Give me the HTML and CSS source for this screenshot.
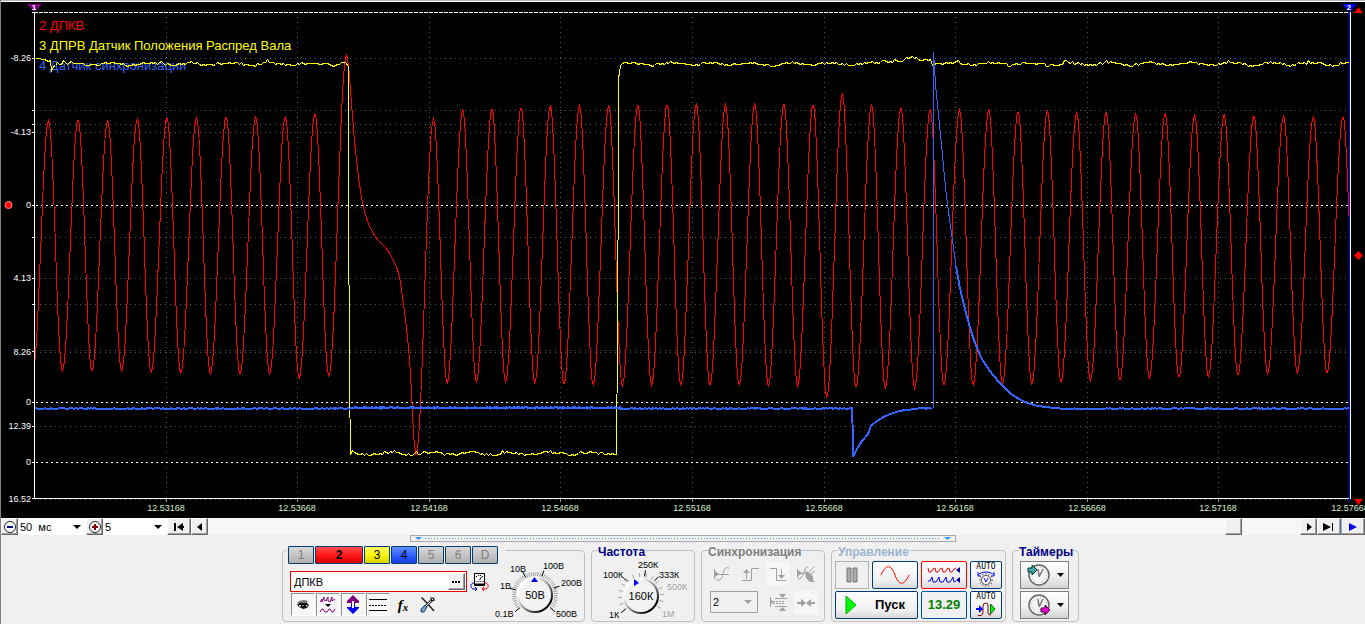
FILE: index.html
```html
<!DOCTYPE html>
<html lang="ru">
<head>
<meta charset="utf-8">
<title>Осциллограф</title>
<link rel="stylesheet" href="styles.css">
</head>
<body>
<main class="app">
  <svg class="chart" viewBox="1 0 1364 518" role="img" aria-label="Осциллограмма">
    <rect class="chart-bg" x="1" y="0" width="1364" height="518"/>
    <rect x="1" y="0" width="1364" height="1" fill="#b4b4b4"/>
    <rect x="1" y="1" width="1364" height="1" fill="#fff"/>
    <g class="grid" id="grid"></g>
    <g class="zero">
      <path class="top-line" d="M34 12.500H1350"/>
      <path d="M36 205.500H1350M36 402.500H1350M36 462.500H1350"/>
    </g>
    <text class="name ch2" x="39" y="30">2 ДПКВ</text>
    <text class="name ch3" x="39" y="50">3 ДПРВ Датчик Положения Распред Вала</text>
    <text class="name ch4" x="39" y="70">4 Датчик синхронизации</text>
    <path class="trace red" id="red"/>
    <path class="trace yellow" id="yellow"/>
    <path class="trace blue" id="blue"/>
    <path class="trace blue thin" d="M933.500 52V408"/>
    <path class="axis" d="M34.500 12V499M32 498.500H1350M1350.500 12V499M32 12.500H34M32 58.500H34M32 110.500H34M32 124.500H34M32 132.500H34M32 205.500H34M32 237.500H34M32 278.500H34M32 304.500H34M32 351.500H34M32 402.500H34M32 426.500H34M32 462.500H34"/>
    <path d="M1349.500 12V502" stroke="#00f" shape-rendering="crispEdges"/>
    <g class="ylabels">
      <text x="31" y="61">-8.26</text><text x="31" y="135">-4.13</text><text x="31" y="208">0</text>
      <text x="31" y="281">4.13</text><text x="31" y="355">8.26</text><text x="31" y="405">0</text>
      <text x="31" y="429">12.39</text><text x="31" y="465">0</text><text x="31" y="502">16.52</text>
    </g>
    <g class="xlabels">
      <text x="166" y="511">12.53168</text><text x="297" y="511">12.53668</text><text x="429" y="511">12.54168</text>
      <text x="560" y="511">12.54668</text><text x="692" y="511">12.55168</text><text x="824" y="511">12.55668</text>
      <text x="955" y="511">12.56168</text><text x="1087" y="511">12.56668</text><text x="1218" y="511">12.57168</text>
      <text x="1350" y="511">12.57668</text>
    </g>
    <path d="M27 4H42L34.500 12Z" fill="#800080"/><text class="cursor" x="34" y="10">1</text>
    <path d="M1342 4H1357L1349.500 12Z" fill="#00f"/><text class="cursor" x="1349" y="10">2</text>
    <circle cx="8.500" cy="205" r="3.500" fill="#f00" stroke="#f88"/>
    <path d="M1354 13L1358.500 7L1363 13ZM1358.500 251L1363 255.500L1358.500 260L1354 255.500ZM1354 499H1363L1358.500 505Z" fill="#f00"/>
  </svg>

  <div class="timebar">
    <button class="bevel zoom-btn" aria-label="Уменьшить"><svg width="14" height="14"><circle cx="7" cy="7" r="5.500" fill="#fff" stroke="#222"/><path d="M4 7H10" stroke="#008" stroke-width="2"/></svg></button>
    <label class="drop drop-time"><select aria-label="Развёртка"><option>50&nbsp; мс</option></select><svg class="arrow" width="8" height="4"><path d="M0 0H8L4 4Z"/></svg></label>
    <button class="bevel zoom-btn" aria-label="Увеличить"><svg width="14" height="14"><circle cx="7" cy="7" r="5.500" fill="#fff" stroke="#222"/><path d="M4 7H10M7 4V10" stroke="#800" stroke-width="2"/></svg></button>
    <label class="drop drop-scale"><select aria-label="Масштаб"><option>5</option></select><svg class="arrow" width="8" height="4"><path d="M0 0H8L4 4Z"/></svg></label>
    <button class="bevel wide" aria-label="В начало"><svg width="12" height="8"><path d="M1 0H3V8H1ZM4 4L10 0V3H11V5H10V8Z"/></svg></button>
    <button class="bevel narrow" aria-label="Назад"><svg width="6" height="8"><path d="M5 0V8L0 4Z"/></svg></button>
    <div class="track"><span class="thumb bevel"></span></div>
    <button class="bevel narrow" aria-label="Вперёд"><svg width="6" height="8"><path d="M1 0V8L6 4Z"/></svg></button>
    <button class="bevel wide" aria-label="В конец"><svg width="12" height="8"><path d="M0 0L8 4L0 8ZM9 0H10V8H9Z"/></svg></button>
    <button class="bevel wide live" aria-label="Воспроизвести"><svg width="10" height="8"><path d="M1 0L9 4L1 8Z" fill="#00f"/></svg></button>
  </div>

  <section class="panel">
    <div class="splitter"><svg width="7" height="3"><path d="M0 0H7L3.500 3Z"/></svg><span class="dots"></span><svg width="7" height="3"><path d="M0 0H7L3.500 3Z"/></svg></div>
    <div class="groups">

      <section class="group channels">
        <div class="settings">
          <div class="tabs">
            <button class="tab">1</button><button class="tab active">2</button><button class="tab t3">3</button><button class="tab t4">4</button><button class="tab">5</button><button class="tab">6</button><button class="tab">D</button>
          </div>
          <div class="name-row">
            <div class="name-box"><input aria-label="Имя канала" value="ДПКВ"><button class="bevel more" aria-label="Выбрать"><svg width="9" height="2"><path d="M0 0H2V2H0ZM3 0H5V2H3ZM6 0H8V2H6Z"/></svg></button></div>
            <button class="flat" aria-label="Прибор"><svg width="20" height="20"><rect x="4.500" y="1.500" width="10" height="12" fill="#fff" stroke="#000"/><path d="M4 11.500H15V14H4Z"/><path d="M5 9.500H14" stroke="#888"/><path d="M6.500 4V5M8.500 3V4M10.500 3V4M12.500 4V5M9.500 8L11.500 5" stroke="#000"/><path d="M4 11C0 11 0 16 3 17H7M5 15L7 17L5 19" fill="none" stroke="#009"/><path d="M15 11C19 11 19 16 16 17H12M14 15L12 17L14 19" fill="none" stroke="#e00"/></svg></button>
          </div>
          <div class="tools">
            <button class="sunk" aria-label="Видимость"><svg width="16" height="14"><path d="M2 5L4 3L9 2L13 3L12 5Z" fill="#777"/><path d="M2 6L5 5H12L14 7L12 10L8 11L4 9Z" fill="#111"/><path d="M4 7H6V9L4 8ZM11 7H13L11 9Z" fill="#ddd"/><path d="M7 7H9V8H7Z" fill="#678"/></svg></button>
            <button class="sunk" aria-label="Сглаживание"><svg width="18" height="18"><path d="M1 6L3 3V6L5 1V4L7 5L9 1V5L11 6L13 1V5L16 3" fill="none" stroke="#800080"/><path d="M6 8H12L9 11Z"/><path d="M1 16L3 13H4L6 16H8L10 13H11L13 16H14L16 13" fill="none" stroke="#800080"/></svg></button>
            <button class="sunk" aria-label="Инвертировать"><svg width="16" height="19"><path d="M8 0L14 6V8H10V9H6V8H2V6Z" fill="#800080"/><path d="M6 9H10V12H14V13L8 19L2 13V12H6Z" fill="#00f"/><path d="M7 6H9V13H7Z" fill="#fff"/></svg></button>
            <button class="sunk" aria-label="Уровни"><svg width="18" height="16"><path d="M0 2.500H18M0 13.500H18" stroke="#000"/><path d="M0 8.500H18" stroke="#000" stroke-dasharray="2 1"/></svg></button>
            <button class="flat fx" aria-label="Функция">f<span>x</span></button>
            <button class="flat" aria-label="Настройка"><svg width="16" height="17"><path d="M1.500 1.500L6 6L14 15" fill="none" stroke="#222" stroke-width="1.500"/><path d="M14 2L6 10" stroke="#333" stroke-width="2.500"/><path d="M13 3L6 10" stroke="#fff"/><path d="M5 9L7 11L4 16L1 16L1 13Z" fill="#79c" stroke="#246"/><path d="M11 1V4L12 5L15 4" fill="none" stroke="#222"/></svg></button>
          </div>
        </div>
        <svg class="dial" width="88" height="66" id="dial-volt">
          <defs><linearGradient id="rim" x1="0" y1="0" x2="1" y2="1"><stop offset="0.250" stop-color="#fff"/><stop offset="0.600" stop-color="#777"/><stop offset="0.850" stop-color="#000"/></linearGradient></defs>
          <g class="ticks"></g>
          <circle cx="40" cy="40" r="17" fill="#f2f2f2" stroke="url(#rim)" stroke-width="2"/>
          <path d="M36 27H43L39.500 22Z" fill="#00f"/>
          <text class="val" x="40" y="44">50В</text>
          <g class="dlabel"><text x="0" y="62">0.1В</text><text x="5" y="34">1В</text><text x="15" y="17">10В</text><text x="48" y="14">100В</text><text x="66" y="31">200В</text><text x="61" y="62">500В</text></g>
        </svg>
      </section>

      <section class="group freq">
        <h2 class="title">Частота</h2>
        <svg class="dial" width="96" height="64" id="dial-freq">
          <g class="ticks"></g>
          <circle cx="45" cy="37" r="17" fill="#f2f2f2" stroke="url(#rim)" stroke-width="2"/>
          <path d="M38 20V27L43 24Z" fill="#00f"/>
          <text class="val" x="45" y="41">160К</text>
          <g class="dlabel"><text x="13" y="59">1К</text><text x="7" y="19">100К</text><text x="42" y="9">250К</text><text x="63" y="19">333К</text><text class="off" x="71" y="31">500К</text><text class="off" x="66" y="58">1М</text></g>
        </svg>
      </section>

      <section class="group sync">
        <h2 class="title gray">Синхронизация</h2>
        <div class="sync-grid">
          <button class="tool" aria-label="Уровень"><svg width="20" height="18"><path d="M3 6L7 9L3 12Z"/><path class="ln" d="M2.500 4V14M2 9.500H17M4 15C9 16 10 13 11 9C12 4 13 2 17 3"/></svg></button>
          <button class="tool" aria-label="Фронт"><svg width="20" height="18"><path class="ln" d="M2 15.500H11.500V3.500H19M6.500 14V7"/><path d="M3 8L6.500 4L10 8Z"/></svg></button>
          <button class="tool checked" aria-label="Спад"><svg width="20" height="18"><path class="ln" d="M2 3.500H8.500V15.500H18M13.500 4V11"/><path d="M10 10H17L13.500 14Z"/></svg></button>
          <button class="tool" aria-label="Вручную"><svg width="20" height="18"><path class="ln" d="M1.500 4V13M2 8.500H9M2 14C8 15 7 2 12 2M13 7L18 2M15 9L19 6"/><path d="M2 5L6 8L2 11ZM9 6L12 7L15 9L17 12V15L19 17H14L10 13Z"/></svg></button>
          <label class="drop sync-drop"><select aria-label="Канал синхронизации"><option>2</option></select><svg class="arrow" width="8" height="5"><path d="M0 0H8L4 4Z"/></svg></label>
          <button class="tool" aria-label="Гистерезис"><svg width="20" height="18"><path d="M11 0H18L14.500 4ZM11 17H18L14.500 13ZM2 5L6 8L2 11Z"/><path class="ln" d="M7 4.500H19M7 12.500H19M2.500 3V13"/><path class="ln" d="M5 7.500H17M5 9.500H17" stroke-dasharray="2 1"/></svg></button>
          <button class="tool checked" aria-label="Центр"><svg width="20" height="18"><path d="M1 8H5V5L10 9L5 13V10H1ZM19 8H15V5L10 9L15 13V10H19Z"/></svg></button>
        </div>
      </section>

      <section class="group control">
        <h2 class="title pale">Управление</h2>
        <div class="control-grid">
          <button class="pause" aria-label="Пауза"><svg width="12" height="16"><path d="M1 1H5V15H1ZM7 1H11V15H7Z" fill="#aaa" stroke="#777"/></svg></button>
          <button class="blue-btn" aria-label="Синус"><svg width="32" height="20"><path d="M2 10C7 -1 12 -1 16 10C20 21 25 21 30 10" fill="none" stroke="#f00"/></svg></button>
          <button class="blue-btn red-frame" aria-label="Поток"><svg width="34" height="20"><path d="M1 3L2 7L4 7L6 4L8 3L9 7L11 7L13 4L15 3L16 7L18 7L20 4L22 3L23 7L25 7L27 4L29 3" fill="none" stroke="#e00"/><path d="M1 16H3L5 12L6 17H9L11 14L12 12L13 17H16L18 14L19 12L20 17H23L25 14L26 12L27 17L29 16" fill="none" stroke="#00f"/><path d="M33 2V8L29 5ZM33 12V18L29 15Z" fill="#009"/></svg></button>
          <button class="blue-btn auto">AUTO<svg width="20" height="16"><path d="M2 4C6 0 14 0 18 4M2 1V5H5M18 1V5H15" fill="none" stroke="#00f"/><circle cx="10" cy="9" r="6" fill="none" stroke="#777" stroke-width="2" stroke-dasharray="1 2"/><circle cx="10" cy="9" r="4.500" fill="#fff" stroke="#555"/><path d="M8 7L10 11L12 7" fill="none" stroke="#00f"/></svg></button>
          <button class="blue-btn start"><svg width="12" height="18"><path d="M1 0L11 9L1 18Z" fill="#0f0" stroke="#0a0"/></svg><span>Пуск</span></button>
          <output class="blue-btn reading">13.29</output>
          <button class="blue-btn auto">AUTO<svg width="22" height="16"><path d="M3 14.500H6Q8 14 8 11V5Q8 2 11 2Q13 2 13 5V12Q13 14 16 14" fill="none" stroke="#800"/><path d="M1 7H4V4L8 8L4 12V9H1Z" fill="#00f"/><path d="M15.500 3L20 8L15.500 13Z" fill="#0f0" stroke="#060"/></svg></button>
        </div>
      </section>

      <section class="group timers">
        <h2 class="title">Таймеры</h2>
        <div class="timer-list">
          <button class="timer" aria-label="Таймер запуска"><svg width="26" height="24"><circle cx="13" cy="12" r="10" fill="#f4f4f4" stroke="#666" stroke-width="1.500"/><circle cx="13" cy="12" r="7.500" fill="none" stroke="#aaa" stroke-dasharray="1 3"/><path d="M13 13L12 6M13 14L17 6" stroke="#777" stroke-width="1.500"/><path d="M2 5H6V2L11 7L6 12V9H2Z" fill="#4aa" stroke="#033"/></svg><svg width="7" height="4"><path d="M0 0H7L3.500 4Z"/></svg></button>
          <button class="timer" aria-label="Таймер остановки"><svg width="26" height="24"><circle cx="13" cy="12" r="10" fill="#f4f4f4" stroke="#666" stroke-width="1.500"/><circle cx="13" cy="12" r="7.500" fill="none" stroke="#aaa" stroke-dasharray="1 3"/><path d="M13 13L12 6M13 14L17 6" stroke="#777" stroke-width="1.500"/><path d="M15 15H19V12L24 17L19 22V19H15Z" fill="#e0c" stroke="#404"/></svg><svg width="7" height="4"><path d="M0 0H7L3.500 4Z"/></svg></button>
        </div>
      </section>
    </div>
  </section>
</main>
<script src="chart.js"></script>
</body>
</html>
```

FILE: styles.css
```css
* { box-sizing: border-box; }
body {
  margin: 0;
  background: #f0f0f0;
  color: #000;
  font: 11px/14px "Liberation Sans", Arial, sans-serif;
}
button, input, select { font: inherit; color: inherit; margin: 0; padding: 0; border-radius: 0; }
button { display: flex; align-items: center; justify-content: center; }
svg { display: block; flex: none; }
.app { border-left: 1px solid #808080; border-bottom: 1px solid #808080; }

.chart { width: 100%; height: auto; }
.chart text { font-size: 9px; fill: #fff; }
.grid path { stroke: #5a5a5a; stroke-dasharray: 1 4; fill: none; shape-rendering: crispEdges; }
.grid .tick { stroke: #999; stroke-dasharray: none; }
.zero path { stroke: #fff; stroke-dasharray: 2 3; shape-rendering: crispEdges; }
.zero .top-line { stroke-dasharray: 4 1; }
.axis { stroke: #fff; fill: none; shape-rendering: crispEdges; }
.trace { fill: none; shape-rendering: crispEdges; }
.red { stroke: #f00; }
.yellow { stroke: #ff0; }
.blue { stroke: #36f; stroke-width: 2; }
.blue.thin { stroke-width: 1; }
.chart .name { font-size: 13px; }
.chart .ch2 { fill: #f00; }
.chart .ch3 { fill: #ff0; }
.chart .ch4 { fill: #36f; }
.ylabels { text-anchor: end; }
.xlabels, .chart .cursor { text-anchor: middle; }
.chart .xlabels text { fill: #d8f0d0; }
.chart .cursor { font-size: 8px; font-weight: bold; }

.bevel {
  background: #f0f0f0;
  border: 1px solid;
  border-color: #fff #696969 #696969 #fff;
  box-shadow: inset -1px -1px #a0a0a0;
}
.timebar { display: flex; height: 17px; background: #fff; }
.zoom-btn { width: 17px; }
.wide { width: 24px; }
.narrow { width: 17px; }
.live { border-left-color: #8ab4e0; }
.drop { position: relative; display: block; background: #fff; }
.drop select {
  width: 100%;
  height: 100%;
  padding-left: 2px;
  border: 0;
  background: transparent;
  appearance: none;
}
.arrow { position: absolute; right: 5px; top: 7px; }
.drop-time { width: 68px; }
.drop-scale { width: 64px; }
.track, .sunk, .checked {
  background: repeating-conic-gradient(#fff 0 25%, #f0f0f0 0 50%) 0 0 / 2px 2px;
}
.track { flex: 1; display: flex; justify-content: flex-end; padding-right: 58px; }
.thumb { width: 17px; }

.splitter {
  width: 40%;
  height: 7px;
  margin: 0 auto;
  padding: 1px 4px;
  display: flex;
  gap: 3px;
  border: 1px solid #a8a8a8;
  fill: #39f;
}
.dots {
  flex: 1;
  height: 1px;
  margin-top: 1px;
  background: repeating-linear-gradient(90deg, #39f 0 1px, transparent 1px 3px);
}
.groups { display: flex; justify-content: center; gap: 6px; padding: 8px 5px 2px 0; }
.group { height: 72px; border: 1px solid #c0c0c0; border-radius: 4px; }
.title {
  width: max-content;
  height: 14px;
  margin: -6px 0 0 6px;
  background: #f0f0f0;
  color: #000080;
  font-size: 12px;
  font-weight: bold;
}
.title.gray { color: #808080; }
.title.pale { color: #9db4d0; }

.channels { width: 303px; display: flex; }
.settings { width: 212px; }
.tabs {
  display: flex;
  gap: 1px;
  width: 218px;
  margin: -5px 0 0 4px;
  padding: 0 1px;
  background: #f0f0f0;
}
.tab {
  width: 26px;
  height: 18px;
  border: 1px solid #003c74;
  border-radius: 1px;
  background: linear-gradient(#d8d8d8, #b0b0b0);
  color: #808080;
  font-size: 12px;
}
.tab.active { width: 48px; background: linear-gradient(#ff5050, #ff1818 50%, #d80000); color: #000; font-weight: bold; }
.tab.t3 { background: linear-gradient(#ffff60, #f8f000 60%, #d8d000); color: #000; }
.tab.t4 { background: linear-gradient(#6090ff, #2858ff 60%, #1840e0); color: #000; }
.name-row { display: flex; gap: 3px; padding: 7px 0 0 7px; }
.name-box { display: flex; width: 177px; height: 21px; padding: 1px; border: 1px solid #e00; background: #fff; }
.name-box input { flex: 1; min-width: 0; border: 0; padding-left: 2px; background: none; }
.more { width: 17px; }
.tools { display: flex; gap: 1px; padding: 1px 0 0 8px; }
.sunk, .flat { width: 24px; height: 23px; border: 0; background-color: transparent; }
.sunk { border: 1px solid; border-color: #909090 #fff #fff #909090; }
.name-row .flat { width: 20px; height: 21px; }
.fx { font: italic bold 15px/18px "Liberation Serif", serif; }
.fx span { font-size: 11px; padding-top: 4px; }
.dial text { font-size: 9px; }
.dial .val { font-size: 11px; text-anchor: middle; }
.dial .off { fill: #a0a0a0; }
.ticks { stroke: #a0a0a0; }
.ticks .major { stroke: #000; }

.channels .dial { margin-top: 4px; }
.freq { width: 104px; }
.freq .dial { margin-left: 4px; }

.sync { width: 124px; }
.sync-grid { display: grid; grid-template-columns: repeat(4, 24px); gap: 6px 4px; padding: 3px 0 0 8px; }
.tool { width: 24px; height: 23px; border: 0; background-color: transparent; fill: #a0a0a0; }
.tool:not(.checked) { background: none; }
.ln { fill: none; stroke: #a0a0a0; }
.sync-drop { grid-column: span 2; width: 48px; height: 22px; border: 1px solid #a0a0a0; background: #f0f0f0; }
.sync-drop .arrow { top: 8px; fill: #a0a0a0; }

.control { width: 175px; }
.control-grid { display: grid; grid-template-columns: 34px 46px 46px 32px; gap: 2px 3px; padding: 2px 0 0 3px; }
.control-grid > * { height: 28px; }
.pause { border: 1px solid #b0b0b0; background: #f0f0f0; }
.blue-btn {
  border: 1px solid #003c74;
  border-radius: 2px;
  background: linear-gradient(#fff, #f0f0f0 70%, #d8d8d8);
}
.red-frame { border-color: #f00; }
.start { grid-column: span 2; gap: 18px; justify-content: flex-start; padding-left: 9px; font-size: 13px; font-weight: bold; }
.auto { flex-direction: column; font: 8px/8px "DejaVu Sans Mono", monospace; }
.reading { display: flex; align-items: center; justify-content: center; border-color: #0050a8; background: #f0f0f0; color: #008000; font-size: 13px; font-weight: bold; }

.timers { width: 67px; }
.timer-list { display: grid; gap: 2px; padding: 2px 0 0 7px; }
.timer { width: 49px; height: 28px; gap: 5px; border: 1px solid #808080; background: linear-gradient(#fff, #eee 60%, #d4d4d4); }
```

FILE: chart.js
```js
const NS = "http://www.w3.org/2000/svg";

function add(parent, d, cls) {
  const p = document.createElementNS(NS, "path");
  p.setAttribute("d", d);
  if (cls) p.setAttribute("class", cls);
  parent.appendChild(p);
}

let seed = 7;
function rnd() {
  seed = (seed * 1103515245 + 12345) % 2147483648;
  return seed / 2147483648;
}

const line = pts => "M" + pts.map(p => p[0].toFixed(1) + " " + p[1].toFixed(1)).join("L");

/* Catmull-Rom interpolation through sampled points */
function smooth(pts) {
  const out = [];
  for (let i = 0; i < pts.length - 1; i++) {
    const a = pts[Math.max(i - 1, 0)], b = pts[i], c = pts[i + 1], d = pts[Math.min(i + 2, pts.length - 1)];
    for (let k = 0; k < 5; k++) {
      const t = k / 5;
      out.push([0, 1].map(j => 0.5 * (2 * b[j] + (c[j] - a[j]) * t + (2 * a[j] - 5 * b[j] + 4 * c[j] - d[j]) * t * t +
        (3 * b[j] - a[j] - 3 * c[j] + d[j]) * t * t * t)));
    }
  }
  out.push(pts[pts.length - 1]);
  return out;
}

/* grid */
const grid = document.getElementById("grid");
for (const y of [58, 110, 124, 132, 207, 237, 278, 304, 350, 352, 426, 499]) add(grid, `M35 ${y + 0.5}H1350`);
for (const x of [166, 297, 429, 560, 692, 824, 955, 1087, 1218]) {
  add(grid, `M${x + 0.5} 17V498`);
  add(grid, `M${x + 0.5} 499V502`, "tick");
}

/* crankshaft sensor: alternating extremes joined by half cosines */
function wave(ext) {
  const out = [];
  for (let i = 0; i < ext.length - 1; i++) {
    const [x0, y0] = ext[i], [x1, y1] = ext[i + 1];
    for (let k = 0; k < 14; k++) {
      const t = k / 14;
      out.push([x0 + (x1 - x0) * t, y0 + (y1 - y0) * (1 - Math.cos(Math.PI * t)) / 2]);
    }
  }
  out.push(ext[ext.length - 1]);
  return out;
}
const left = [[33, 371]];
const lp = [121, 120, 121, 119, 118, 118, 117, 117, 117, 114];
const lt = [371, 371, 371, 372, 373, 374, 374, 374, 378, 376];
lp.forEach((y, i) => left.push([48.5 + 29.6 * i, y], [62.4 + 29.6 * i, lt[i]]));
left.push([346.5, 55]);
const gap = smooth([[347, 56], [348.5, 67], [349.5, 77], [351.5, 103], [354.5, 140], [358.5, 177], [363.5, 207], [369.5, 226],
  [376.5, 238], [385, 247], [391.5, 257], [398.5, 273], [402.5, 297], [406.5, 328], [410, 367], [412.5, 413], [414, 440]]);
const right = [[416, 455]];
const rp = [119, 110, 109, 108, 106, 106, 106, 105, 105, 104, 105, 104, 104, 105, 94, 105, 108, 110, 110, 110, 112, 111, 113,
  113, 114, 114, 115, 115, 116, 116, 117, 117];
const rt = [383, 382, 382, 383, 384, 385, 386, 385, 385, 385, 385, 386, 386, 397, 387, 388, 388, 385, 385, 384, 384, 382, 381,
  380, 378, 377, 377, 375, 374, 373, 373, 372];
let px = 433.5;
rp.forEach((y, i) => {
  right.push([px, y], [px + 13.7, rt[i]]);
  px += i < 14 ? 29.2 : i < 22 ? 29.3 : i < 27 ? 29.5 : 29.7;
});
const red = wave(left).concat(gap, wave(right)).filter(p => p[0] >= 35 && p[0] <= 1349);
document.getElementById("red").setAttribute("d", line(red));

/* camshaft sensor */
function noisy(x0, x1, base) {
  const out = [];
  for (let x = x0; x <= x1; x += 2) {
    let y = base + Math.sin(x * 0.157) * 1.2 + (rnd() - 0.5) * 2.4;
    if (rnd() > 0.96) y -= 2;
    if (base < 100 && x > 880 && x < 932) y -= x > 905 ? 5 : 3;
    out.push([x + 0.5, Math.round(y) + 0.5]);
  }
  return out;
}
const start = [[36.5, 58.5], [44.5, 59.5], [48.5, 61.5], [50.5, 60.5], [51.5, 71.5], [53.5, 66.5]];
const yellow = start.concat(noisy(55, 346, 63.5), [[348.5, 66.5], [348.5, 185], [349.5, 380], [350.5, 455]],
  noisy(352, 615, 453), [[616.5, 454], [617.5, 336], [618.5, 153], [618.5, 79], [620.5, 65.5]], noisy(622, 1349, 63.5));
document.getElementById("yellow").setAttribute("d", line(yellow));

/* sync sensor */
function thick(x0, x1, y) {
  const out = [];
  for (let x = x0; x <= x1; x++) out.push([x, y + (rnd() > 0.75 ? -0.8 : rnd() > 0.85 ? 0.8 : 0)]);
  return out;
}
const blue = thick(35, 350, 408.5).concat(thick(351, 620, 407.8), thick(621, 851, 408.5),
  [[852, 408], [852.5, 423], [853, 457], [857, 449], [862, 441], [868, 434], [871, 426]],
  smooth([[872, 425], [880, 419], [888, 415], [900, 411], [915, 409]]), thick(917, 932, 408.5));
const decay = smooth([[934, 60], [936, 90], [938, 110], [942, 150], [946, 192], [952, 237], [956, 266]]);
const tail = smooth([[956, 266], [960, 288], [966, 313], [973, 337], [981, 357], [990, 371], [1000, 383], [1010, 393],
  [1023, 401], [1037, 405.7], [1057, 408.3]]).concat(thick(1060, 1100, 409.2), thick(1101, 1349, 408.5));
document.getElementById("blue").setAttribute("d", line(blue) + line(tail));
add(document.querySelector(".chart"), line(decay), "trace blue thin");

/* dial scales */
function ticks(id, cx, cy, step, majors) {
  const g = document.querySelector("#" + id + " .ticks");
  const mark = (a, r0, r1, cls) => {
    const t = a * Math.PI / 180, s = Math.sin(t), c = -Math.cos(t);
    add(g, `M${(cx + s * r0).toFixed(1)} ${(cy + c * r0).toFixed(1)}L${(cx + s * r1).toFixed(1)} ${(cy + c * r1).toFixed(1)}`, cls);
  };
  for (let a = -130; a <= 130; a += step) mark(a, 19, 23);
  majors.forEach(a => mark(a, 20, 26, "major"));
}
ticks("dial-volt", 40, 40, 6, [-130, -75, -28, 20, 70, 130]);
ticks("dial-freq", 45, 37, 18, [-130, -44, 10, 42]);
```
